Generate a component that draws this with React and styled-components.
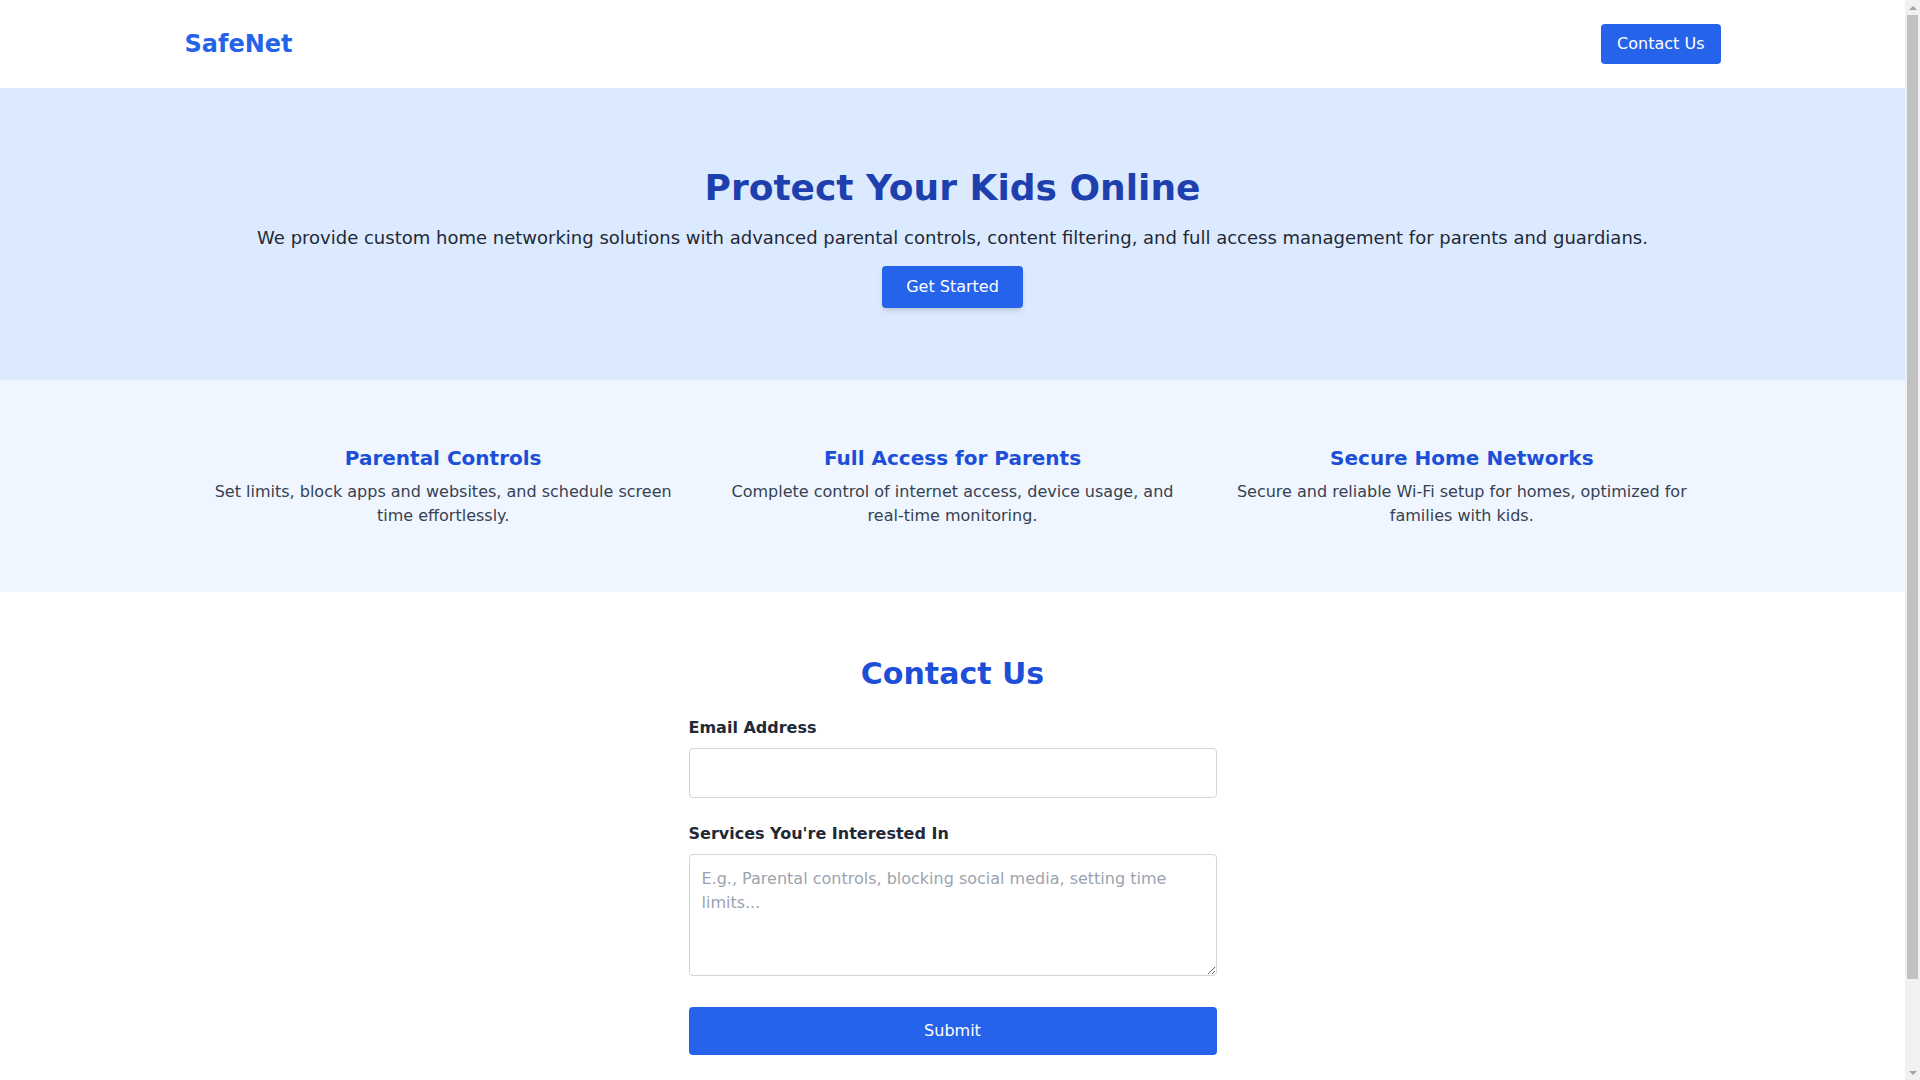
import styled, { createGlobalStyle } from 'styled-components';

const GlobalStyle = createGlobalStyle`
  * { box-sizing: border-box; }
  body {
    margin: 0;
    font-family: "DejaVu Sans", "Noto Sans", sans-serif;
    color: #1f2937;
    background: #ffffff;
  }
`;

// page body leaves room for the classic scrollbar on the right
const Page = styled.div`
  margin-right: 15px;
`;

const ScrollTrack = styled.div`
  position: fixed;
  top: 0;
  right: 0;
  width: 15px;
  height: 100vh;
  background: #f1f1f1;
  display: flex;
  flex-direction: column;
  align-items: center;
`;

const ScrollArrow = styled.div`
  height: 15px;
  display: flex;
  align-items: center;
  justify-content: center;
  &::before {
    content: '';
    border-left: 4px solid transparent;
    border-right: 4px solid transparent;
    ${props => props.$down
      ? 'border-top: 4px solid #a3a3a3;'
      : 'border-bottom: 4px solid #a3a3a3;'}
  }
`;

const ScrollThumb = styled.div`
  width: 11px;
  height: 964px;
  background: #c1c1c1;
`;

const ScrollSpacer = styled.div`
  flex: 1;
`;

const Nav = styled.header`
  background: #ffffff;
`;

const NavInner = styled.div`
  max-width: 1536px;
  margin: 0 auto;
  padding: 24px 0;
  display: flex;
  align-items: center;
  justify-content: space-between;
`;

const Logo = styled.div`
  font-size: 24px;
  line-height: 32px;
  font-weight: 700;
  color: #2563eb;
`;

const Button = styled.a`
  display: inline-block;
  background: #2563eb;
  color: #ffffff;
  font-size: 16px;
  line-height: 24px;
  padding: ${props => props.$wide ? '9px 24px' : '8px 16px'};
  border-radius: 4px;
  text-decoration: none;
  cursor: pointer;
  box-shadow: ${props => props.$shadow ? '0 4px 6px -1px rgba(0,0,0,0.1), 0 2px 4px -2px rgba(0,0,0,0.1)' : 'none'};
`;

const Hero = styled.section`
  background: #dbeafe;
  padding: 80px 16px 72px;
  text-align: center;
`;

const HeroTitle = styled.h1`
  margin: 0 0 16px;
  font-size: 36px;
  line-height: 40px;
  font-weight: 700;
  color: #1e40af;
`;

const HeroText = styled.p`
  margin: 0 0 14px;
  font-size: 18px;
  line-height: 28px;
  color: #1f2937;
`;

const Features = styled.section`
  background: #eff6ff;
  padding: 64px 0;
`;

const FeatureGrid = styled.div`
  max-width: 1536px;
  margin: 0 auto;
  padding: 0 16px;
  display: grid;
  grid-template-columns: repeat(3, 1fr);
  gap: 24px;
  text-align: center;
`;

const FeatureTitle = styled.h3`
  margin: 0 0 8px;
  font-size: 20px;
  line-height: 28px;
  font-weight: 700;
  color: #1d4ed8;
`;

const FeatureText = styled.p`
  margin: 0;
  font-size: 16px;
  line-height: 24px;
  color: #374151;
`;

const NoWrap = styled.span`
  white-space: nowrap;
`;

const Contact = styled.section`
  padding: 64px 16px 116px;
`;

const ContactTitle = styled.h2`
  margin: 0 0 24px;
  text-align: center;
  font-size: 30px;
  line-height: 36px;
  font-weight: 700;
  color: #1d4ed8;
`;

const Form = styled.form`
  width: 528px;
  margin: 0 auto;
`;

const Field = styled.div`
  margin-bottom: 24px;
`;

const Label = styled.label`
  display: block;
  margin-bottom: 8px;
  font-size: 16px;
  line-height: 24px;
  font-weight: 700;
  color: #1f2937;
`;

const Input = styled.input`
  display: block;
  width: 100%;
  padding: 12px;
  font: inherit;
  font-size: 16px;
  line-height: 24px;
  border: 1px solid #d1d5db;
  border-radius: 4px;
  outline: none;
`;

const TextArea = styled.textarea`
  width: 100%;
  padding: 12px;
  font: inherit;
  font-size: 16px;
  line-height: 24px;
  border: 1px solid #d1d5db;
  border-radius: 4px;
  outline: none;
  &::placeholder { color: #9ca3af; }
`;

const Submit = styled.button`
  display: block;
  width: 100%;
  margin-top: 27px;
  padding: 12px;
  font: inherit;
  font-size: 16px;
  line-height: 24px;
  color: #ffffff;
  background: #2563eb;
  border: none;
  border-radius: 4px;
  cursor: pointer;
`;

const features = [
  { title: 'Parental Controls', text: <>Set limits, block apps and websites, and schedule screen time effortlessly.</> },
  { title: 'Full Access for Parents', text: <>Complete control of internet access, device usage, and <NoWrap>real-time</NoWrap> monitoring.</> },
  { title: 'Secure Home Networks', text: <>Secure and reliable <NoWrap>Wi-Fi</NoWrap> setup for homes, optimized for families with kids.</> },
];

export default function App() {
  return (
    <>
      <GlobalStyle />
      <Page>
        <Nav>
          <NavInner>
            <Logo>SafeNet</Logo>
            <Button href="#contact">Contact Us</Button>
          </NavInner>
        </Nav>

        <Hero>
          <HeroTitle>Protect Your Kids Online</HeroTitle>
          <HeroText>
            We provide custom home networking solutions with advanced parental controls, content filtering, and full access management for parents and guardians.
          </HeroText>
          <Button href="#contact" $wide $shadow>Get Started</Button>
        </Hero>

        <Features>
          <FeatureGrid>
            {features.map(f => (
              <div key={f.title}>
                <FeatureTitle>{f.title}</FeatureTitle>
                <FeatureText>{f.text}</FeatureText>
              </div>
            ))}
          </FeatureGrid>
        </Features>

        <Contact id="contact">
          <ContactTitle>Contact Us</ContactTitle>
          <Form onSubmit={e => e.preventDefault()}>
            <Field>
              <Label htmlFor="email">Email Address</Label>
              <Input id="email" type="email" />
            </Field>
            <Field>
              <Label htmlFor="services">Services You're Interested In</Label>
              <TextArea
                id="services"
                rows={4}
                placeholder="E.g., Parental controls, blocking social media, setting time limits..."
              />
            </Field>
            <Submit type="submit">Submit</Submit>
          </Form>
        </Contact>
      </Page>

      <ScrollTrack>
        <ScrollArrow />
        <ScrollThumb />
        <ScrollSpacer />
        <ScrollArrow $down />
      </ScrollTrack>
    </>
  );
}
